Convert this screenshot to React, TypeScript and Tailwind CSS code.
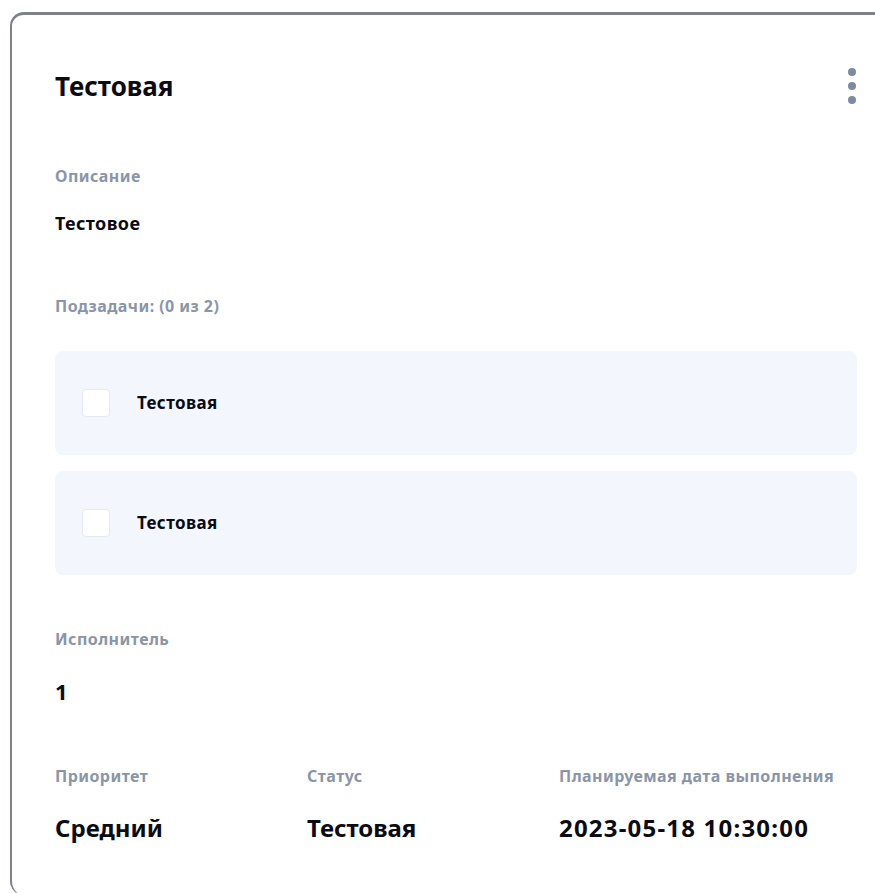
import React from "react";

const font = { fontFamily: '"Noto Sans", "Open Sans", sans-serif' };

function Label({ children }: { children: React.ReactNode }) {
  return <div className="text-[16px] leading-[20px] font-bold tracking-[0.45px] text-[#8a95a8]">{children}</div>;
}

function Subtask({ title }: { title: string }) {
  return (
    <div className="flex h-[104px] items-center rounded-[8px] bg-[#f3f6fc] pl-[27px]">
      <div className="h-[28px] w-[28px] rounded-[4px] border border-[#e6e9ef] bg-white" />
      <span className="ml-[27px] text-[17px] leading-[20px] font-bold tracking-[0.4px] text-[#0b0b14]">{title}</span>
    </div>
  );
}

export default function App() {
  return (
    <div className="h-[893px] w-[875px] overflow-hidden bg-white" style={font}>
      <div className="ml-[10px] mt-[12px] h-[883px] w-[890px] rounded-tl-[14px] rounded-bl-[14px] border-l-2 border-t-[3px] border-[#7e808a] bg-white pl-[43px] pr-[43px] pt-[53px]">
        <div className="flex items-center justify-between">
          <h1 className="text-[26px] leading-[32px] font-bold text-[#0b0b14]">Тестовая</h1>
          <div className="mr-[1px] flex flex-col gap-[6px]">
            <span className="block h-[8px] w-[8px] rounded-full bg-[#7c8aa2]" />
            <span className="block h-[8px] w-[8px] rounded-full bg-[#7c8aa2]" />
            <span className="block h-[8px] w-[8px] rounded-full bg-[#7c8aa2]" />
          </div>
        </div>

        <div className="mt-[62px]">
          <Label>Описание</Label>
          <div className="mt-[27px] text-[18px] leading-[20px] font-bold tracking-[0.4px] text-[#0b0b14]">Тестовое</div>
        </div>

        <div className="mt-[63px]">
          <Label>Подзадачи: (0 из 2)</Label>
          <div className="mt-[35px] flex flex-col gap-[16px]">
            <Subtask title="Тестовая" />
            <Subtask title="Тестовая" />
          </div>
        </div>

        <div className="mt-[54px]">
          <Label>Исполнитель</Label>
          <div className="mt-[28px] text-[22px] leading-[28px] font-bold text-[#0b0b14]">1</div>
        </div>

        <div className="mt-[61px] grid grid-cols-[252px_252px_1fr]">
          <div>
            <Label>Приоритет</Label>
            <div className="mt-[27px] text-[24px] leading-[30px] font-bold text-[#0b0b14]">Средний</div>
          </div>
          <div>
            <Label>Статус</Label>
            <div className="mt-[27px] text-[24px] leading-[30px] font-bold text-[#0b0b14]">Тестовая</div>
          </div>
          <div>
            <Label>Планируемая дата выполнения</Label>
            <div className="mt-[27px] text-[24px] leading-[30px] font-bold tracking-[1.2px] text-[#0b0b14]">2023-05-18 10:30:00</div>
          </div>
        </div>
      </div>
    </div>
  );
}
